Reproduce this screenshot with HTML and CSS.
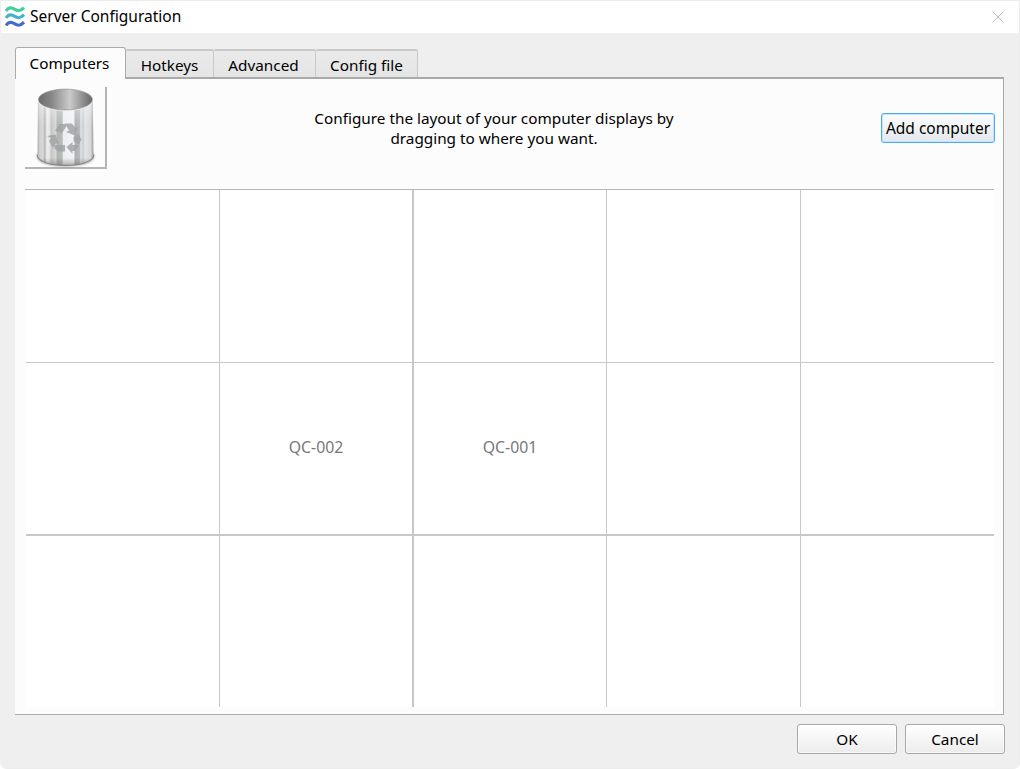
FILE: index.html
```html
<!DOCTYPE html>
<html lang="en">
<head>
<meta charset="utf-8">
<title>Server Configuration</title>
<link rel="stylesheet" href="styles.css">
</head>
<body>
<div class="window">
  <header class="titlebar">
    <svg class="logo" viewBox="0 0 20 22" fill="none" stroke-width="3.100">
      <path stroke="#42cf9b" d="M1 5C3.500 1.200 6.500 1.300 9.800 3.400S15.500 5.300 19 1.700"/>
      <path stroke="#43b3cb" d="M1 12C3.500 8.200 6.500 8.300 9.800 10.400S15.500 12.300 19 8.700"/>
      <path stroke="#426bcd" d="M1 19.500C3.500 15.700 6.500 15.800 9.800 17.900S15.500 19.800 19 16.200"/>
    </svg>
    <h1 class="title">Server Configuration</h1>
    <svg class="close" viewBox="0 0 12 12"><path d="M.5.5l11 11M11.500.5l-11 11" stroke="#bdbdbd" fill="none"/></svg>
  </header>
  <nav class="tabs">
    <div class="tab tab-active"><span>Computers</span></div>
    <div class="tab tab-hotkeys"><span>Hotkeys</span></div>
    <div class="tab tab-advanced"><span>Advanced</span></div>
    <div class="tab tab-config"><span>Config file</span></div>
  </nav>
  <main class="panel">
    <section class="toolbar">
      <div class="trash">
        <svg class="bin" viewBox="0 0 64 84">
          <defs>
            <linearGradient id="metal">
              <stop offset="0" stop-color="#aaa"/><stop offset=".04" stop-color="#d0d0d0"/>
              <stop offset=".1" stop-color="#d9d9d9"/><stop offset=".13" stop-color="#b5b5b5"/>
              <stop offset=".17" stop-color="#f0f0f0"/><stop offset=".22" stop-color="#e2e2e2"/>
              <stop offset=".24" stop-color="#c5c5c5"/><stop offset=".33" stop-color="#d8d8d8"/>
              <stop offset=".35" stop-color="#b2b4b1"/><stop offset=".44" stop-color="#b8bab7"/>
              <stop offset=".46" stop-color="#eceeef"/><stop offset=".65" stop-color="#f2f3f4"/>
              <stop offset=".67" stop-color="#aeb1b3"/><stop offset=".75" stop-color="#b7babc"/>
              <stop offset=".77" stop-color="#dcdfe1"/><stop offset=".82" stop-color="#cdd0d3"/>
              <stop offset=".85" stop-color="#e2e6e9"/><stop offset=".95" stop-color="#d4d8db"/>
              <stop offset="1" stop-color="#999"/>
            </linearGradient>
            <linearGradient id="inside">
              <stop offset="0" stop-color="#6c6c6c"/><stop offset=".25" stop-color="#888"/>
              <stop offset=".58" stop-color="#cbcbcb"/><stop offset="1" stop-color="#666"/>
            </linearGradient>
            <linearGradient id="shade" x2="0" y2="1">
              <stop offset="0" stop-color="#fff" stop-opacity=".45"/><stop offset=".4" stop-color="#fff" stop-opacity="0"/>
              <stop offset=".88" stop-color="#555" stop-opacity="0"/><stop offset="1" stop-color="#555" stop-opacity=".4"/>
            </linearGradient>
            <filter id="soft" x="-20%" y="-50%" width="140%" height="200%"><feGaussianBlur stdDeviation="1"/></filter>
          </defs>
          <ellipse cx="32.500" cy="71" rx="28.500" ry="9.500" fill="#777" opacity=".6" filter="url(#soft)"/>
          <path d="M5 14L4.500 69c0 14 56 14 56 0L59.800 14z" fill="url(#metal)"/>
          <path d="M5 14L4.500 69c0 14 56 14 56 0L59.800 14z" fill="url(#shade)"/>
          <path d="M4 68.500c0 14.500 57 14.500 57 0" fill="none" stroke="#858585" stroke-width="1.100"/>
          <ellipse cx="32.400" cy="14.500" rx="27.400" ry="10.600" fill="#eee"/>
          <ellipse cx="32.400" cy="13.500" rx="26.900" ry="10.400" fill="url(#inside)" stroke="#888" stroke-width=".6"/>
          <g fill="#a1a5a7" opacity=".85">
            <path d="M22 45l4.500-7H35l-6 9zM32 37.500h7l3.500 4.500 3-1-3.500 8.500-9-3.500 3-1.500z"/>
            <path d="M14 50l8.500-1.500L26 58l-3-1-3 5-4-7 2-3zM21.500 59H32v6.500h-7l-3.500-3z"/>
            <path d="M33.500 61l6-5v3H46l-3.500 6H39.500v3zM40.500 51l5-3.500 3 6.500-3 4.500-5-3.500z"/>
          </g>
        </svg>
      </div>
      <p class="hint"><span>Configure the layout of your computer displays by</span><br><span>dragging to where you want.</span></p>
      <button class="button add"><span>Add computer</span></button>
    </section>
    <section class="grid">
      <div class="cell"></div><div class="cell"></div><div class="cell"></div><div class="cell"></div><div class="cell"></div>
      <div class="cell"></div><div class="cell"><span>QC-002</span></div><div class="cell"><span>QC-001</span></div><div class="cell"></div><div class="cell"></div>
      <div class="cell"></div><div class="cell"></div><div class="cell"></div><div class="cell"></div><div class="cell"></div>
    </section>
  </main>
  <footer class="actions">
    <button class="button"><span>OK</span></button>
    <button class="button"><span>Cancel</span></button>
  </footer>
</div>
</body>
</html>
```
FILE: styles.css
```css
* { box-sizing: border-box; }
body { margin: 0; background: #fff; font: 15.3px/20px "Noto Sans", sans-serif; color: #000; }
.window { width: 1020px; height: 769px; overflow: hidden; background: #efefef; border: 1px solid #ececec; border-left-color: #f0f0f0; border-radius: 0 0 7px 7px; }
.titlebar { height: 32px; background: #fff; display: flex; align-items: center; padding: 0 15px 0 4px; }
.logo { width: 20px; height: 22px; }
.title { margin: 0 0 2px 5px; font-size: 15.500px; font-weight: 400; line-height: 20px; flex: 1; }
.close { width: 12px; height: 12px; }
.tabs { display: flex; align-items: flex-end; height: 44px; margin-left: 14px; }
.tab { height: 28px; border: 2px solid #c8c8c8; border-bottom: 0; border-left-width: 0; border-right-width: 1px; border-radius: 2px 2px 0 0; background: linear-gradient(#eaeaea, #e5e5e5); text-align: center; padding-top: 4px; white-space: nowrap; }
.tab-active { width: 111px; height: 32px; border: 1px solid #aaa; border-bottom: 0; border-radius: 3px 3px 0 0; background: #fcfcfc; margin-bottom: -2px; padding: 5px 2px 0 0; z-index: 1; }
.tab-hotkeys { width: 88px; }
.tab-advanced { width: 102px; padding-right: 2px; }
.tab-config { width: 102px; }
.panel { width: 989px; height: 638px; margin-left: 14px; background: #fcfcfc; border-top: 2px solid #aaa; border-right: 1px solid #aaa; border-bottom: 1px solid #aaa; padding: 8px 9px 0 10px; }
.toolbar { width: 970px; height: 102px; display: flex; align-items: flex-start; justify-content: space-between; }
.trash { width: 82px; height: 82px; border-right: 2px solid #b5b5b5; border-bottom: 2px solid #b5b5b5; padding-left: 8px; }
.bin { display: block; width: 64px; height: 84px; margin-top: -1px; }
.hint { width: 380px; margin: 21px 0 0; text-align: center; white-space: nowrap; }
.button { width: 100px; height: 30px; border: 1px solid #a8a8a8; border-radius: 3px; background: linear-gradient(#fff, #ececec); font: 15.3px/20px "Noto Sans", sans-serif; color: #000; padding: 0; white-space: nowrap; box-shadow: inset 0 0 0 1px #fff9; }
.add { width: 114px; margin-top: 26px; font-size: 15.500px; border-color: #46aaf4; background: linear-gradient(#fcfcfc, #e3e8ec); box-shadow: inset 0 0 0 1px #c9e5fa; }
.grid { width: 969px; height: 518px; border-top: 1px solid #b8b8b8; padding-left: 1px; display: grid; grid-template-columns: 194px 194px 193px 194px 193px; grid-template-rows: 173px 173px 171px; }
.cell { display: flex; align-items: center; justify-content: center; background: #fff; border: 0 solid #c8c8c8; border-right-width: 1px; border-bottom-width: 1px; color: #787878; font-size: 15.800px; padding-bottom: 3px; }
.cell:nth-child(5n + 2) { border-right-width: 2px; }
.cell:nth-child(5n) { border-right-width: 0; }
.cell:nth-child(n + 6) { border-bottom-width: 2px; }
.cell:nth-child(n + 11) { border-bottom-width: 0; }
.actions { display: flex; justify-content: flex-end; gap: 8px; padding: 9px 14px 0 0; }
```
